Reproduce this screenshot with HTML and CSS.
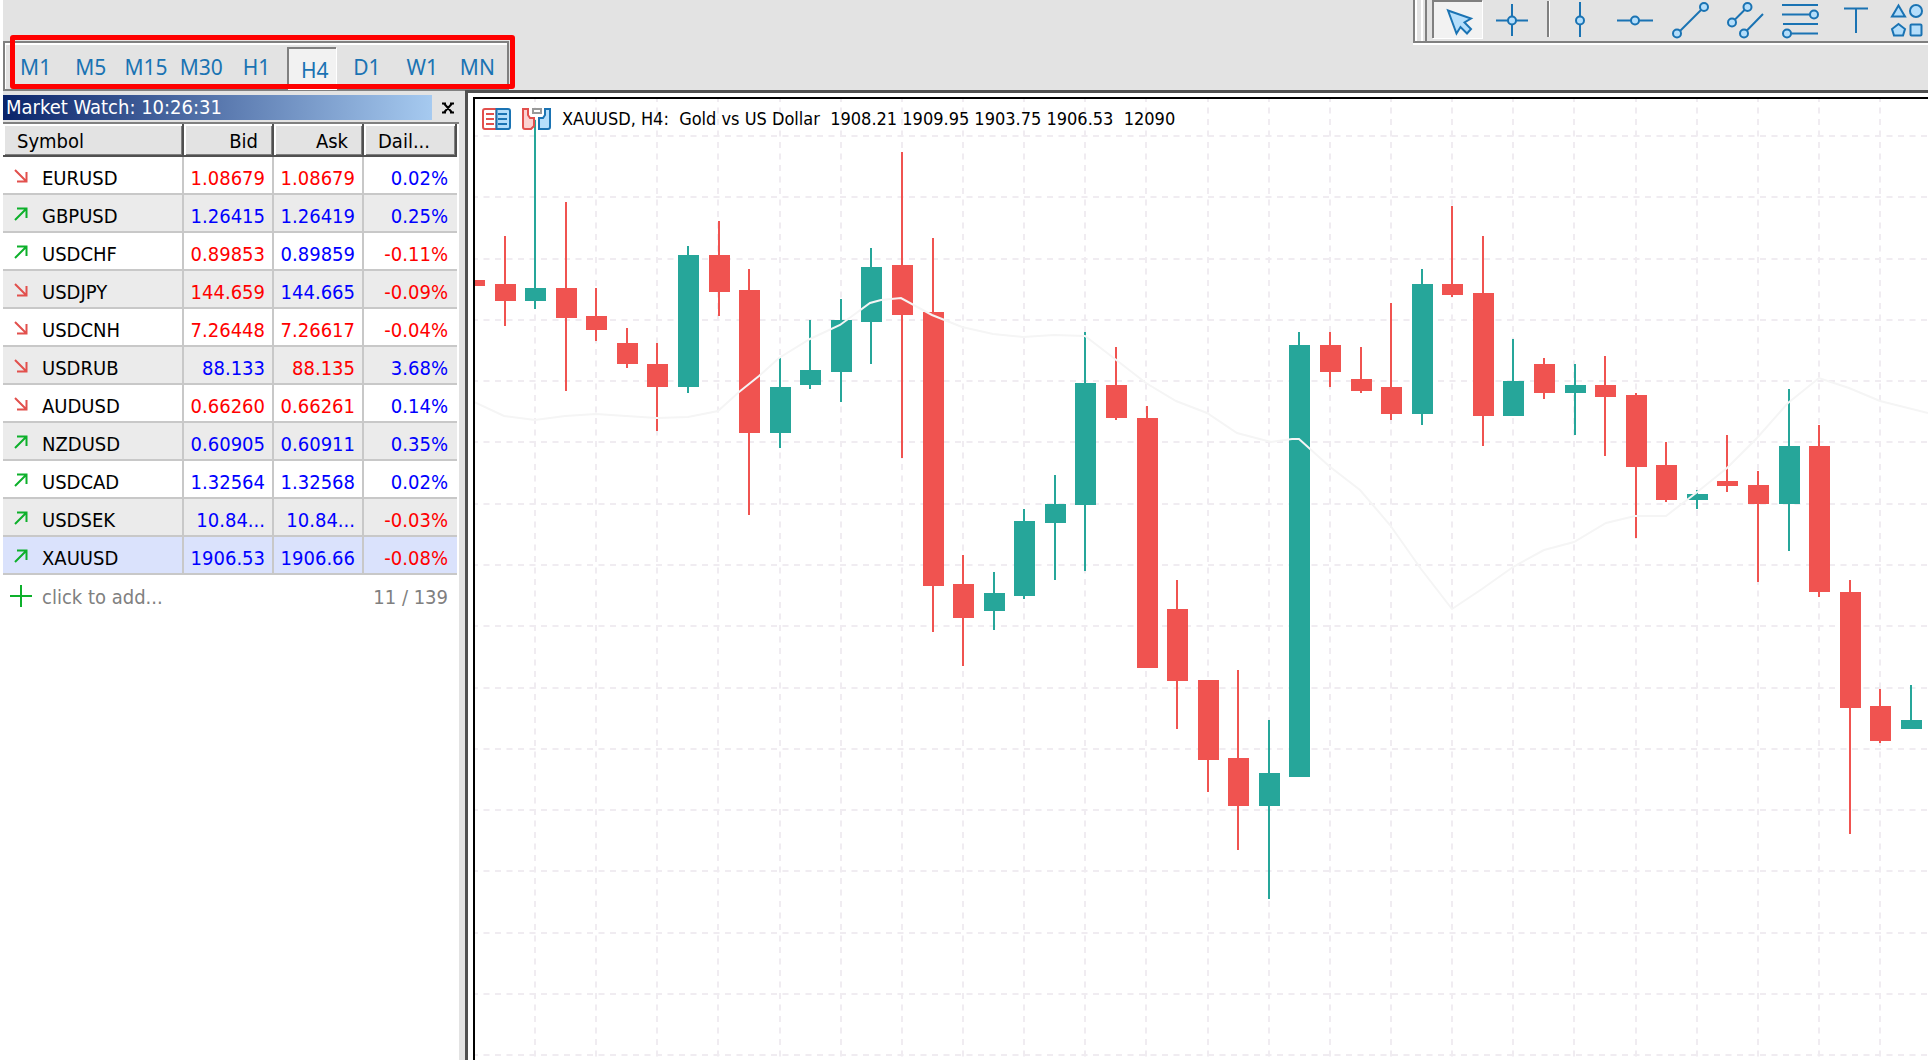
FILE: index.html
```html
<!DOCTYPE html>
<html lang="en">
<head>
<meta charset="utf-8">
<title>XAUUSD, H4</title>
<link rel="stylesheet" href="styles.css">
</head>
<body>
<div class="app">
  <header class="toolbars">
    <div class="draw-bar" role="toolbar" aria-label="Drawing tools">
      <span class="grip"></span>
      <button class="tool pressed" aria-label="Cursor"><svg viewBox="0 0 36 36"><path class="fill" d="M8 9.500L31 17.500L24.500 21.500L31 28L27 32.500L20.500 26L16.500 32.500Z"/></svg></button>
      <button class="tool" aria-label="Crosshair"><svg viewBox="0 0 36 36"><path d="M18 3V15M18 24V35M2 19.500H14M22 19.500H34"/><circle class="fill" cx="18" cy="19.500" r="4"/></svg></button>
      <span class="divider"></span>
      <button class="tool" aria-label="Vertical line"><svg viewBox="0 0 36 36"><path d="M18 1V36"/><circle class="fill" cx="18" cy="19.500" r="4"/></svg></button>
      <button class="tool" aria-label="Horizontal line"><svg viewBox="0 0 36 36"><path d="M0 19.500H36"/><circle class="fill" cx="18" cy="19.500" r="4"/></svg></button>
      <button class="tool" aria-label="Trend line"><svg viewBox="0 0 36 36"><path d="M5 33L32 6"/><circle class="fill" cx="5" cy="32.500" r="4"/><circle class="fill" cx="32" cy="6" r="4"/></svg></button>
      <button class="tool" aria-label="Channel"><svg viewBox="0 0 36 36"><path d="M5 21.500L20.500 6M17 32.500L36 13"/><circle class="fill" cx="5" cy="21.500" r="4"/><circle class="fill" cx="20.500" cy="6" r="4"/><circle class="fill" cx="17" cy="32.500" r="4"/></svg></button>
      <button class="tool" aria-label="Fibonacci retracement"><svg viewBox="0 0 36 36"><path d="M0 4H36M0 13.500H30M1 23H36M5 32.500H36"/><circle class="fill" cx="32" cy="13.500" r="4"/><circle class="fill" cx="5" cy="32.500" r="4"/></svg></button>
      <button class="tool" aria-label="Text"><svg viewBox="0 0 36 36"><path d="M7 7.500H31M19 7.500V32"/></svg></button>
      <button class="tool" aria-label="Shapes"><svg viewBox="0 0 36 36"><path class="fill" d="M6.500 4.500L13 15.500H0ZM6.500 23L13 28L11 34.500H2L0 28Z"/><circle class="fill" cx="24" cy="10" r="6"/><rect class="fill" x="18.500" y="23.500" width="11" height="11" rx="1"/></svg></button>
    </div>
    <div class="time-bar" role="toolbar" aria-label="Timeframes">
      <button class="frame">M1</button><button class="frame">M5</button><button class="frame">M15</button><button class="frame">M30</button><button class="frame">H1</button><button class="frame pressed">H4</button><button class="frame">D1</button><button class="frame">W1</button><button class="frame">MN</button>
    </div>
    <div class="highlight"></div>
  </header>
  <main class="workspace">
    <section class="watch">
      <div class="watch-title">
        <h2>Market Watch: 10:26:31</h2>
        <button class="close" aria-label="Close"><svg viewBox="0 0 12 12"><path d="M2 1.500L10 10.500M10 1.500L2 10.500M0 1.500H4M8 1.500H12M0 10.500H4M8 10.500H12"/></svg></button>
      </div>
      <div class="watch-body">
        <table>
          <colgroup><col class="c-symbol"><col class="c-price"><col class="c-price"><col class="c-daily"></colgroup>
          <thead><tr><th>Symbol</th><th class="num">Bid</th><th class="num">Ask</th><th class="daily">Dail...</th></tr></thead>
          <tbody>
            <tr><td><svg class="arrow dn"><use href="#dn"/></svg>EURUSD</td><td class="red">1.08679</td><td class="red">1.08679</td><td class="blue">0.02%</td></tr>
            <tr><td><svg class="arrow up"><use href="#up"/></svg>GBPUSD</td><td class="blue">1.26415</td><td class="blue">1.26419</td><td class="blue">0.25%</td></tr>
            <tr><td><svg class="arrow up"><use href="#up"/></svg>USDCHF</td><td class="red">0.89853</td><td class="blue">0.89859</td><td class="red">-0.11%</td></tr>
            <tr><td><svg class="arrow dn"><use href="#dn"/></svg>USDJPY</td><td class="red">144.659</td><td class="blue">144.665</td><td class="red">-0.09%</td></tr>
            <tr><td><svg class="arrow dn"><use href="#dn"/></svg>USDCNH</td><td class="red">7.26448</td><td class="red">7.26617</td><td class="red">-0.04%</td></tr>
            <tr><td><svg class="arrow dn"><use href="#dn"/></svg>USDRUB</td><td class="blue">88.133</td><td class="red">88.135</td><td class="blue">3.68%</td></tr>
            <tr><td><svg class="arrow dn"><use href="#dn"/></svg>AUDUSD</td><td class="red">0.66260</td><td class="red">0.66261</td><td class="blue">0.14%</td></tr>
            <tr><td><svg class="arrow up"><use href="#up"/></svg>NZDUSD</td><td class="blue">0.60905</td><td class="blue">0.60911</td><td class="blue">0.35%</td></tr>
            <tr><td><svg class="arrow up"><use href="#up"/></svg>USDCAD</td><td class="blue">1.32564</td><td class="blue">1.32568</td><td class="blue">0.02%</td></tr>
            <tr><td><svg class="arrow up"><use href="#up"/></svg>USDSEK</td><td class="blue">10.84...</td><td class="blue">10.84...</td><td class="red">-0.03%</td></tr>
            <tr class="selected"><td><svg class="arrow up"><use href="#up"/></svg>XAUUSD</td><td class="blue">1906.53</td><td class="blue">1906.66</td><td class="red">-0.08%</td></tr>
          </tbody>
        </table>
        <div class="add-row">
          <button class="add"><svg viewBox="0 0 22 22"><path d="M11 0V22M0 11H22"/></svg>click to add...</button>
          <span>11 / 139</span>
        </div>
      </div>
    </section>
    <section class="chart">
      <svg class="plot" id="plot" role="img" aria-label="Gold vs US Dollar candlestick chart"></svg>
      <div class="chart-head">
        <button class="chart-btn" aria-label="Depth of market"><svg viewBox="0 0 29 22"><path d="M14.500 1H3Q1 1 1 3V19Q1 21 3 21H14.500Z" fill="#fff" stroke="#e2504d" stroke-width="2"/><path d="M14.500 1H26Q28 1 28 3V19Q28 21 26 21H14.500Z" fill="#b4defb" stroke="#1a73b3" stroke-width="2"/><path d="M4 6H12M4 11H12M4 16H12" stroke="#e2504d" stroke-width="2"/><path d="M16 6H25M16 11H25M16 16H25" stroke="#1a73b3" stroke-width="2"/></svg></button>
        <button class="chart-btn" aria-label="One click trading"><svg viewBox="0 0 29 22"><path d="M1 1H6V7L8 10H12V18L9 21H3Q1 21 1 19Z" fill="#fbd3d2" stroke="#e2504d" stroke-width="2"/><path d="M28 1H23V7L21 10H17V21H26Q28 21 28 19Z" fill="#b4defb" stroke="#1a73b3" stroke-width="2"/><rect x="11" y="1" width="8" height="4" fill="#fff" stroke="#999" stroke-width="2"/></svg></button>
        <h1>XAUUSD, H4:&nbsp; Gold vs US Dollar&nbsp; 1908.21 1909.95 1903.75 1906.53&nbsp; 12090</h1>
      </div>
    </section>
  </main>
</div>
<svg class="defs" aria-hidden="true">
  <symbol id="dn" viewBox="0 0 14 14"><path d="M1 1L12 12M12.500 3V12.500H3"/></symbol>
  <symbol id="up" viewBox="0 0 14 14"><path d="M1 13L12 2M3 1.500H12.500V11"/></symbol>
</svg>
<script src="chart.js"></script>
</body>
</html>
```

FILE: styles.css
```css
* { box-sizing: border-box; }
body {
  margin: 0;
  background: #fff;
  color: #000;
  font: 20px/24px "DejaVu Sans Condensed", "DejaVu Sans", sans-serif;
}
button { margin: 0; padding: 0; border: 0; background: none; font: inherit; color: inherit; }
h1, h2 { margin: 0; font-weight: normal; }
svg { display: block; fill: none; }
.defs { position: absolute; width: 0; height: 0; }

.app {
  display: flex;
  flex-direction: column;
  height: 100vh;
  margin-left: 3px;
  overflow: hidden;
  background: #e3e3e3;
}

/* toolbars */
.toolbars { position: relative; flex: none; height: 90px; }
.draw-bar {
  display: flex;
  gap: 5px;
  width: 515px;
  height: 43px;
  margin-left: auto;
  overflow: hidden;
  border-left: 2px solid #808080;
  border-bottom: 2px solid #808080;
  box-shadow: 0 2px 0 #fff;
}
.grip {
  flex: none;
  width: 12px;
  height: 41px;
  border: solid #808080;
  border-width: 0 2px 0 0;
  background: linear-gradient(to right, #fff 2px, #e3e3e3 2px, #e3e3e3 6px, #fff 6px, #fff 8px, #e3e3e3 8px);
}
.tool { flex: none; width: 50px; height: 38px; }
.tool svg { width: 36px; height: 36px; margin: 0 auto; overflow: visible; stroke: #1a73b3; stroke-width: 2; }
.tool .fill { fill: #b4defb; }
.divider { flex: none; width: 3px; height: 36px; margin: 1px 0 0 5px; border-left: 2px solid #808080; border-right: 1px solid #fff; }
.tool.pressed, .frame.pressed {
  border: solid #808080;
  border-width: 2px 0 0 2px;
  background: #f2f2f2;
  box-shadow: 1px 1px 0 #fff;
}
.tool.pressed svg { margin-top: -2px; }
.time-bar {
  display: grid;
  grid-template-columns: repeat(9, 1fr);
  width: 506px;
  height: 49px;
  margin-top: -2px;
  padding: 4px 2px 0 3px;
  border: 2px solid #808080;
  border-bottom-width: 1px;
  box-shadow: inset 1px 2px 0 #fff;
  color: #1a73b3;
  font: 21px/28px "Noto Sans", "Open Sans", sans-serif;
}
.frame { margin: 0 3px; padding: 4px 0 6px; }
.frame.pressed { padding: 4px 0 2px 4px; }
.highlight {
  position: absolute;
  left: 7px;
  top: 35px;
  width: 505px;
  height: 54px;
  border: 5px solid #f00;
  border-radius: 3px;
}

/* workspace */
.workspace { display: flex; flex: 1; min-height: 0; }
.watch { display: flex; flex: none; flex-direction: column; width: 462px; padding-top: 2px; border-top: 1px solid #808080; }
.watch-title { display: flex; align-items: center; height: 29px; }
.watch-title h2 {
  width: 429px;
  height: 25px;
  padding-left: 3px;
  background: linear-gradient(to right, #0a246a, #a6caf0);
  color: #fff;
  font-size: 20px;
}
.close { padding-left: 10px; }
.close svg { width: 12px; height: 12px; stroke: #000; stroke-width: 2; }
.watch-body { flex: 1; width: 456px; border-top: 2px solid #808080; background: #fff; }
table { width: 454px; border-collapse: separate; border-spacing: 0; table-layout: fixed; }
.c-symbol { width: 181px; }
.c-price { width: 90px; }
.c-daily { width: 93px; }
th {
  height: 33px;
  padding: 2px 14px 0;
  border: solid #505050;
  border-width: 0 2px 2px 0;
  background: #e3e3e3;
  box-shadow: inset 2px 2px 0 #fff, inset -1px -1px 0 #808080;
  font-weight: normal;
  text-align: left;
}
th.num { text-align: right; }
td {
  height: 38px;
  padding: 6px 7px 0 0;
  border: solid #c8c8c8;
  border-width: 0 2px 2px 0;
  text-align: right;
}
td:first-child { padding-left: 39px; text-align: left; }
td:last-child { border-right-width: 0; padding-right: 9px; }
tbody tr:nth-child(even) { background: #ebebeb; }
tbody tr.selected { background: #dae2fc; }
.red { color: #f00; }
.blue { color: #00f; }
.arrow { float: left; width: 14px; height: 14px; margin: 3px 0 0 -28px; stroke-width: 2; }
.dn { stroke: #e2504d; }
.up { stroke: #0db02b; }
.add-row { display: flex; justify-content: space-between; padding: 10px 11px 0 7px; color: #808080; }
.add { display: flex; gap: 10px; }
.add svg { width: 22px; height: 22px; stroke: #0db02b; stroke-width: 2; }

/* chart */
.chart {
  position: relative;
  flex: 1;
  min-width: 0;
  overflow: hidden;
  border: solid #505050;
  border-width: 3px 0 0 3px;
  background: #fff;
}
.plot { position: absolute; inset: 4px 0 0 5px; width: 100%; height: 100%; border: solid #000; border-width: 2px 0 0 2px; }
.grid { stroke: #f0ecf1; stroke-width: 2; }
.average { stroke: #f5f5f5; stroke-width: 2; }
.bull { fill: #26a69a; }
.bear { fill: #f05350; }
.chart-head { position: relative; display: flex; align-items: center; gap: 11px; padding: 14px 0 0 14px; }
.chart-btn svg { width: 29px; height: 22px; }
.chart-head h1 { font-size: 18px; white-space: nowrap; }
```

FILE: chart.js
```js
// Candles: [high, open/close top, open/close bottom, low, rising]
const candles = [
  [280,280,286,286,0],[236,284,301,326,0],[120,288,301,309,1],[202,288,318,391,0],[288,316,330,341,0],
  [328,343,364,368,0],[343,364,387,431,0],[246,255,387,393,1],[221,255,292,316,0],[269,290,433,515,0],
  [358,387,433,448,1],[320,370,385,389,1],[299,320,372,402,1],[248,267,322,364,1],[152,265,315,458,0],
  [238,312,586,632,0],[555,584,618,666,0],[572,593,611,630,1],[509,521,596,599,1],[475,504,523,580,1],
  [332,383,505,571,1],[347,385,418,420,0],[406,418,668,668,0],[580,609,681,729,0],[680,680,760,792,0],
  [670,758,806,850,0],[720,773,806,899,1],[332,345,777,777,1],[332,345,372,387,0],[347,379,391,393,0],
  [303,387,414,420,0],[269,284,414,425,1],[206,284,295,297,0],[236,293,416,446,0],[339,381,416,416,1],
  [358,364,393,399,0],[364,385,393,435,1],[356,385,397,456,0],[393,395,467,538,0],[442,465,500,502,0],
  [490,494,500,509,1],[435,481,486,492,0],[471,485,504,582,0],[389,446,504,551,1],[425,446,592,597,0],
  [580,592,708,834,0],[689,706,741,743,0],[685,720,729,729,1]
];
const average = "474,402 504,416 535,420 565,416 596,414 626,416 657,418 688,417 718,411 739,392 759,376 779,358 810,339 840,325 870,303 881,300 901,298 932,315 962,327 993,334 1023,337 1054,335 1085,336 1115,359 1146,383 1176,401 1207,413 1237,433 1271,442 1292,439 1299,439 1329,466 1360,490 1390,525 1421,569 1452,609 1482,589 1513,567 1544,550 1574,542 1606,523 1635,516 1666,516 1696,493 1727,468 1757,438 1788,403 1819,378 1849,388 1880,401 1928,413";
const left = 475, top0 = 99, step = 30.57;
const dash = 'stroke-dasharray="6 5.5"';
let out = "";
for (let k = 0; k < 40; k++) {
  const x = Math.round(535 + k * step * 2) - left;
  const y = Math.round(136 + k * 61.28) - top0;
  out += `<line class="grid" ${dash} x1="${x}" x2="${x}" y1="-3" y2="100%"/>`;
  out += `<line class="grid" ${dash} x1="-3" x2="100%" y1="${y}" y2="${y}"/>`;
}
candles.forEach(([high, a, b, low, rising], i) => {
  const x = Math.round(474 + i * step) - left;
  const cls = rising ? "bull" : "bear";
  out += `<rect class="${cls}" x="${x - 1}" y="${high - top0}" width="2" height="${low - high}"/>`;
  out += `<rect class="${cls}" x="${x - 10}" y="${a - top0}" width="21" height="${b - a}"/>`;
});
out += `<polyline class="average" transform="translate(${-left} ${-top0})" points="${average}"/>`;
document.getElementById("plot").innerHTML = out;
```
